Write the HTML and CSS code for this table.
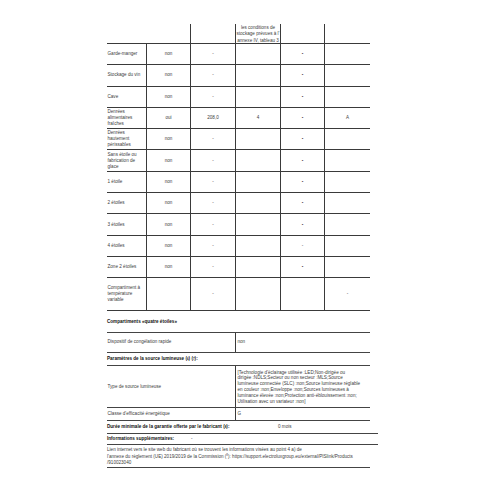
FILE: index.html
```html
<!DOCTYPE html>
<html lang="fr">
<head>
<meta charset="utf-8">
<title>Fiche produit</title>
<link rel="stylesheet" href="styles.css">
</head>
<body>
<div class="page">
  <div class="grid6 head">
    <div class="c span2 br"></div>
    <div class="c br"></div>
    <div class="c br hdr">les conditions de<br>stockage prévues à l'<br>annexe IV, tableau 3</div>
    <div class="c br"></div>
    <div class="c"></div>
  </div>
  <div class="grid6 row">
    <div class="c br lbl">Garde-manger</div><div class="c br ctr">non</div><div class="c br ctr">-</div><div class="c br"></div><div class="c br ctr dk">-</div><div class="c"></div>
  </div>
  <div class="grid6 row">
    <div class="c br lbl">Stockage du vin</div><div class="c br ctr">non</div><div class="c br ctr">-</div><div class="c br"></div><div class="c br ctr dk">-</div><div class="c"></div>
  </div>
  <div class="grid6 row">
    <div class="c br lbl">Cave</div><div class="c br ctr">non</div><div class="c br ctr">-</div><div class="c br"></div><div class="c br ctr dk">-</div><div class="c"></div>
  </div>
  <div class="grid6 row">
    <div class="c br lbl">Denrées<br>alimentaires<br>fraîches</div><div class="c br ctr">oui</div><div class="c br ctr">208,0</div><div class="c br ctr">4</div><div class="c br ctr dk">-</div><div class="c ctr">A</div>
  </div>
  <div class="grid6 row">
    <div class="c br lbl">Denrées<br>hautement<br>périssables</div><div class="c br ctr">non</div><div class="c br ctr">-</div><div class="c br"></div><div class="c br ctr dk">-</div><div class="c"></div>
  </div>
  <div class="grid6 row">
    <div class="c br lbl">Sans étoile ou<br>fabrication de<br>glace</div><div class="c br ctr">non</div><div class="c br ctr">-</div><div class="c br"></div><div class="c br ctr dk">-</div><div class="c"></div>
  </div>
  <div class="grid6 row">
    <div class="c br lbl">1 étoile</div><div class="c br ctr">non</div><div class="c br ctr">-</div><div class="c br"></div><div class="c br ctr dk">-</div><div class="c"></div>
  </div>
  <div class="grid6 row">
    <div class="c br lbl">2 étoiles</div><div class="c br ctr">non</div><div class="c br ctr">-</div><div class="c br"></div><div class="c br ctr dk">-</div><div class="c"></div>
  </div>
  <div class="grid6 row">
    <div class="c br lbl">3 étoiles</div><div class="c br ctr">non</div><div class="c br ctr">-</div><div class="c br"></div><div class="c br ctr dk">-</div><div class="c"></div>
  </div>
  <div class="grid6 row">
    <div class="c br lbl">4 étoiles</div><div class="c br ctr">non</div><div class="c br ctr">-</div><div class="c br"></div><div class="c br ctr">-</div><div class="c"></div>
  </div>
  <div class="grid6 row">
    <div class="c br lbl">Zone 2 étoiles</div><div class="c br ctr">non</div><div class="c br ctr">-</div><div class="c br"></div><div class="c br ctr dk">-</div><div class="c"></div>
  </div>
  <div class="grid6 row last">
    <div class="c br lbl">Compartiment à<br>température<br>variable</div><div class="c br"></div><div class="c br ctr">-</div><div class="c br"></div><div class="c br"></div><div class="c ctr">-</div>
  </div>

  <div class="heading h1">Compartiments «quatre étoiles»</div>
  <div class="grid2 r-disp">
    <div class="c br lbl">Dispositif de congélation rapide</div>
    <div class="c val">non</div>
  </div>
  <div class="heading h2">Paramètres de la source lumineuse (<sup>6</sup>) (<sup>7</sup>):</div>
  <div class="grid2 r-type">
    <div class="c br lbl">Type de source lumineuse</div>
    <div class="c val multi">[Technologie d'éclairage utilisée :LED;Non-dirigée ou<br>dirigée :NDLS;Secteur ou non secteur :MLS;Source<br>lumineuse connectée (SLC) :non;Source lumineuse réglable<br>en couleur :non;Enveloppe :non;Sources lumineuses à<br>luminance élevée :non;Protection anti-éblouissement :non;<br>Utilisation avec un variateur :non]</div>
  </div>
  <div class="grid2 r-classe">
    <div class="c br lbl">Classe d'efficacité énergétique</div>
    <div class="c val">G</div>
  </div>
  <div class="wide r-duree">
    <div class="c bold">Durée minimale de la garantie offerte par le fabricant (<sup>8</sup>):</div>
    <div class="c">0 mois</div>
  </div>
  <div class="wide r-info">
    <div class="c bold">Informations supplémentaires:</div>
    <div class="c">-</div>
  </div>
  <div class="link">Lien internet vers le site web du fabricant où se trouvent les informations visées au point 4 a) de<br>l'annexe du règlement (UE) 2019/2019 de la Commission (<sup>8</sup>): https://support.electroluxgroup.eu/external/PISlink/Products<br>/910023040</div>
</div>
</body>
</html>
```

FILE: styles.css
```css
html, body {
  margin: 0;
  padding: 0;
  background: #ffffff;
}

body {
  font-family: "Liberation Sans", Arial, sans-serif;
  font-size: 4.6px;
  line-height: 6px;
  color: #404040;
}

.page {
  margin-left: 107px;
  padding-top: 24px;
  width: 263px;
}

.grid6 {
  display: grid;
  grid-template-columns: 40px 44px 45px 45px 44px 45px;
  box-sizing: border-box;
  border-bottom: 1px solid #3a3a3a;
}

.head { height: 20px; }
.row { height: 21.3px; }
.last { height: 32.7px; }

.c {
  display: flex;
  align-items: center;
  min-width: 0;
  white-space: nowrap;
}

.span2 { grid-column: span 2; }

.br { border-right: 1px solid #3a3a3a; }

.lbl { padding-left: 0.5px; }

.ctr {
  justify-content: center;
  text-align: center;
}

.dk {
  color: #000;
  font-weight: bold;
}

.hdr {
  justify-content: center;
  text-align: center;
  align-items: flex-start;
  padding-top: 0.5px;
  line-height: 6.7px;
  overflow: visible;
}

.heading {
  font-weight: bold;
  color: #111;
  display: flex;
  align-items: center;
}

.h1 { height: 21.3px; }
.h2 { height: 12.3px; }

sup {
  font-size: 3px;
  line-height: 0;
  vertical-align: 1.6px;
}

.grid2 {
  display: grid;
  grid-template-columns: 129px 134px;
  box-sizing: border-box;
  border-bottom: 1px solid #444;
}

.r-disp {
  border-top: 1px solid #444;
  height: 20.4px;
}

.r-type {
  border-top: 1px solid #444;
  height: 43.3px;
}

.r-classe { height: 12.7px; }

.val { padding-left: 1.5px; }

.multi {
  line-height: 5.8px;
  padding-top: 1px;
}

.wide {
  display: grid;
  box-sizing: border-box;
  width: 271px;
  border-bottom: 1px solid #444;
}

.r-duree {
  grid-template-columns: 171px 1fr;
  height: 13.3px;
}

.r-info {
  grid-template-columns: 84px 1fr;
  height: 11px;
}

.bold {
  font-weight: bold;
  color: #111;
}

.link {
  box-sizing: border-box;
  padding-top: 2px;
  line-height: 6.5px;
  white-space: nowrap;
  border-bottom: 1px solid #444;
}
```
